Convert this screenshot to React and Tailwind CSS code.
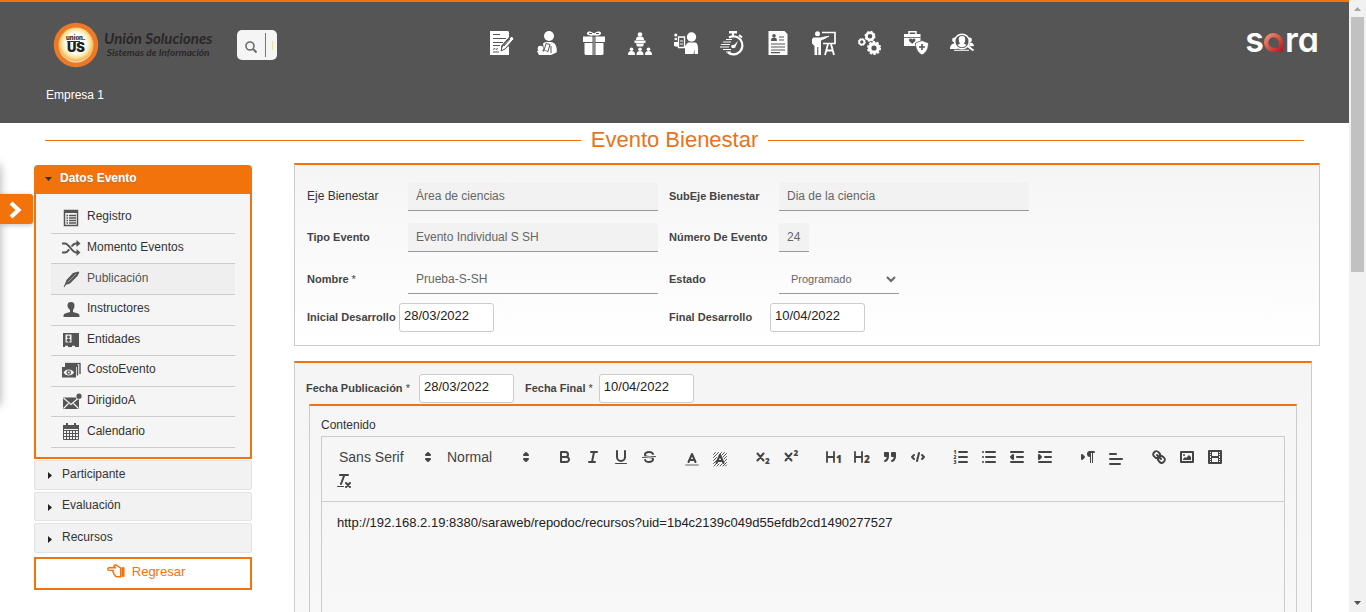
import React from "react";

/* ---------- Header module icons (24px grid, white on grey) ---------- */

const moduleIcons = [
  {
    label: "Solicitudes",
    art: (
      <>
        <path d="M0 0h18l1 1v5l-8 9v4h3l5-4v9H0z" />
        <path d="M3 3.5h7M3 7.5h13M3 11.5h10M3 14.5h7" stroke="#555" strokeWidth="1.2" />
        <path d="M3 18.500l2-1 1 1 2-1M3 21h6" stroke="#555" strokeWidth="1" fill="none" />
        <path d="M21 5.500c2 0 3 1.500 2.500 3L15 18l-4 2 1-4z" stroke="#555" strokeWidth="1" />
        <path d="M14 15l6-7" stroke="#555" strokeWidth="1" />
      </>
    ),
  },
  {
    label: "Nómina",
    art: (
      <>
        <circle cx="13" cy="5" r="5" />
        <path d="M7 12.500c1-1.500 3-1.500 6-1.500 4 0 6 1 7 4 1 2.500 1 5.500.5 6.500L15 24H9z" />
        <path d="M10 12.500l4 1-2 7-4-1z" stroke="#555" strokeWidth="1" />
        <path d="M15 15v7" stroke="#555" strokeWidth="1" />
        <circle cx="4.500" cy="17.500" r="2.800" />
        <path d="M1 20l5-2 6 3.500L11 24H3z" />
        <circle cx="7.500" cy="19.500" r="1" fill="#555" />
      </>
    ),
  },
  {
    label: "Bienestar",
    art: (
      <>
        <path d="M11 4.500C8 5 4.500 4 5 2s4-2 6 0h2c2-2 5.500-2 6 0s-3 3-6 2.500z" />
        <path d="M7 2.500h3M14 2.500h3" stroke="#555" strokeWidth="1" />
        <path d="M1 5.500h9.500V11H1zM13.500 5.500H23V11h-9.500zM2.500 12h8v12h-7l-1-1zM13.500 12h8v11l-1 1h-7z" />
        <path d="M11 6h2v18h-2z" opacity=".3" />
      </>
    ),
  },
  {
    label: "Organigrama",
    art: (
      <>
        <circle cx="12" cy="3.500" r="2.300" />
        <path d="M8 9c0-3 1.500-3.500 4-3.500S16 6 16 9zM6.500 9.500h11V12h-11zM8 12.500h8l-1 3H9z" />
        <circle cx="3.500" cy="18.200" r="1.800" />
        <path d="M0 24c0-3 1-4 3.500-4S7 21 7 24z" />
        <circle cx="12" cy="18.200" r="1.800" />
        <path d="M8.500 24c0-3 1-4 3.500-4s3.500 1 3.500 4z" />
        <circle cx="20.500" cy="18.200" r="1.800" />
        <path d="M17 24c0-3 1-4 3.500-4s3.500 1 3.500 4z" />
      </>
    ),
  },
  {
    label: "Selección",
    art: (
      <>
        <circle cx="17.500" cy="6" r="4.700" />
        <path d="M11 23v-8l3-3.500h7c2.500.5 3.500 3 3 11.500h-3.500v-5l-1 5z" />
        <path d="M4.500 6h6v10.500h-6z" fill="none" stroke="#fff" strokeWidth="1.300" />
        <path d="M6 10h3M6 13h3" stroke="#fff" strokeWidth="1" />
        <circle cx="1.800" cy="4" r="1.600" />
        <circle cx="1.800" cy="8" r="1.300" />
        <path d="M0 11h4v5l-4-1z" />
      </>
    ),
  },
  {
    label: "Tiempos",
    art: (
      <>
        <path d="M9 6.500a9 9 0 1 1-1 15" fill="none" stroke="#fff" strokeWidth="2.200" />
        <path d="M9 0h8v2.500H9zM12 2h2v4h-2z" />
        <path d="M19 4l3 2.500" stroke="#fff" strokeWidth="2" />
        <path d="M6 8.500h6M3 11h8M1 13.500h9M0 16h9M3 18.500h8M6 21h5" stroke="#fff" strokeWidth="1.200" />
        <path d="M12 16l6-6-3 7z" />
        <circle cx="13" cy="15.500" r="1.800" />
      </>
    ),
  },
  {
    label: "Hoja de vida",
    art: (
      <>
        <path d="M2.500 0h16l3 3v21h-19z" />
        <circle cx="8" cy="4.800" r="1.800" fill="#555" />
        <path d="M5 10c0-3 1-3.500 3-3.500s3 .5 3 3.500z" fill="#555" />
        <path d="M13 6h5M13 9h5M5 13h14M5 16h14M5 19h14M5 21.700h9" stroke="#555" strokeWidth="1.200" />
      </>
    ),
  },
  {
    label: "Capacitación",
    art: (
      <>
        <circle cx="5.500" cy="2.800" r="2.500" />
        <path d="M1.500 6.500h7l6-1.500.5 1.500-6 3V24H6.300v-8H5.200v8H2.500v-9L0 12.500V8z" />
        <path d="M10 1.500h13v11H11" fill="none" stroke="#fff" strokeWidth="1.700" />
        <path d="M11 8l6-3" stroke="#fff" strokeWidth="1.200" />
        <path d="M16 13l-3 11M19 13l3 11M14.500 19.500h6" stroke="#fff" strokeWidth="1.800" fill="none" />
      </>
    ),
  },
  {
    label: "Configuración",
    art: (
      <>
        <circle cx="12" cy="5.300" r="3.600" fill="none" stroke="#fff" strokeWidth="2.600" />
        <circle cx="12" cy="5.300" r="4.900" fill="none" stroke="#fff" strokeWidth="1.200" strokeDasharray="2 1.850" />
        <circle cx="3.800" cy="11" r="2.600" fill="none" stroke="#fff" strokeWidth="1.900" />
        <circle cx="3.800" cy="11" r="3.500" fill="none" stroke="#fff" strokeWidth=".8" strokeDasharray="1.500 1.250" />
        <circle cx="16" cy="17" r="4.300" fill="none" stroke="#fff" strokeWidth="3.400" />
        <circle cx="16" cy="17" r="6.300" fill="none" stroke="#fff" strokeWidth="1.500" strokeDasharray="2.300 1.650" />
      </>
    ),
  },
  {
    label: "Seguridad y salud",
    art: (
      <>
        <path d="M5 3V.8h7V3" fill="none" stroke="#fff" strokeWidth="1.500" />
        <path d="M0 3h16.500v9l-3 3H0z" />
        <path d="M0 6.500h16.500" stroke="#555" strokeWidth=".8" />
        <path d="M5 8.500c1-1.500 2.500-1 3.200 0 .8-1 2.300-1.500 3.200 0 .5 1.500-1 2.500-3.200 4.200C6 11 4.500 10 5 8.500z" fill="#555" />
        <path d="M18 9.500l6.500 2.500c0 5.500-2 9.500-6.500 12-4.500-2.500-6.500-6.500-6.500-12z" stroke="#555" strokeWidth=".8" />
        <path d="M18 13v6M15 16h6" stroke="#555" strokeWidth="1.600" />
      </>
    ),
  },
  {
    label: "Búsqueda de personal",
    art: (
      <>
        <circle cx="4.500" cy="9" r="2.400" />
        <path d="M0 18c0-4 2-5.500 5-5.500l3 5.500z" />
        <circle cx="19.500" cy="9" r="2.400" />
        <path d="M24 15c0-2-2-3.500-4-3.500l-1 4z" />
        <circle cx="12" cy="10.500" r="7.300" fill="#555" stroke="#fff" strokeWidth="1.500" />
        <path d="M12 5c2.500 0 3.500 1.500 3.200 4-.2 2-.7 2.800-1.200 3.500l2.500 1.500c-2.500 3-6.500 3-9 0l2.500-1.500c-.5-.7-1-1.500-1.200-3.500C8.500 6.500 9.500 5 12 5z" />
        <path d="M17.500 15l6 4.500" stroke="#fff" strokeWidth="2" />
        <path d="M4 19.300h15" stroke="#fff" strokeWidth="1" />
      </>
    ),
  },
];

/* ---------- Side menu ---------- */

const G = "#555555";

const menuItems = [
  {
    label: "Registro",
    art: (
      <>
        <path d="M2.500 1.500h13v15h-13z" fill="none" stroke={G} strokeWidth="1.500" />
        <path d="M2 1h14v3H2z" fill={G} />
        <path d="M7 6.500h7M7 9h7M7 11.500h7M7 14h7" stroke={G} strokeWidth="1.300" />
        <path d="M4.500 6.500H6M4.500 9H6M4.500 11.500H6M4.500 14H6" stroke={G} strokeWidth="1.300" />
      </>
    ),
  },
  {
    label: "Momento Eventos",
    art: (
      <>
        <path d="M0 4.500h3c4 0 7 9 11 9h2M0 13.500h3c1.700 0 3-1.500 4.200-3.200M9.500 7.500C10.800 5.700 12.200 4.500 14 4.500h2" fill="none" stroke={G} strokeWidth="2" />
        <path d="M14.500 1l4 3.500-4 3.500zM14.500 10l4 3.500-4 3.500z" fill={G} />
      </>
    ),
  },
  {
    label: "Publicación",
    active: true,
    art: (
      <>
        <path d="M11 3l5.500-1.500.8 1L15.500 6 8 13.500l-4 1.300-1.700 2.400-.7-.7L3 14l1.500-4z" fill={G} />
        <path d="M6 12l8-8" stroke="#efefef" strokeWidth=".5" />
      </>
    ),
  },
  {
    label: "Instructores",
    art: (
      <path
        d="M9 1c2.500 0 3.700 1.500 3.500 4-.1 2-.8 3-1.500 4v2l5 1.500c1.200.5 1.500 1.300 1.500 3.500H1.500c0-2.200.3-3 1.500-3.500L8 11V9C7.300 8 5.700 7 5.500 5 5.300 2.500 6.500 1 9 1z"
        fill={G}
      />
    ),
  },
  {
    label: "Entidades",
    art: (
      <>
        <path d="M1 2h16v14H1z" fill={G} />
        <path d="M3.500 3.500h6v8h-6z" fill="#f5f5f5" />
        <circle cx="6.500" cy="6" r="1.400" fill={G} />
        <path d="M4 11.500L5 8l1.500-.5L8 8l1 3.500-1-2-1 2h-1l-1-2z" fill={G} />
        <path d="M3 15.500h3M10 15.500h3" stroke="#f5f5f5" strokeWidth="1.500" />
      </>
    ),
  },
  {
    label: "CostoEvento",
    art: (
      <>
        <path d="M3 2h12v3H3zM0 5h14v10.500H0z" fill={G} />
        <path d="M15.500 2.500v11M18 1.500v10.500" stroke={G} strokeWidth="1.400" />
        <path d="M3 1.500h15.500" stroke={G} strokeWidth="1.300" />
        <path d="M1.500 10.500c2-4 8.500-4 10.500 0-2 4-8.500 4-10.500 0z" fill="#f5f5f5" />
        <circle cx="6.800" cy="10.500" r="2.200" fill={G} />
        <circle cx="6.800" cy="10.500" r="1" fill="#f5f5f5" />
      </>
    ),
  },
  {
    label: "DirigidoA",
    art: (
      <>
        <path d="M1 4.500h16V16H1z" fill={G} />
        <path d="M1.500 5L9 11.500 16.500 5M1.500 15.500l5-5M16.500 15.500l-5-5" fill="none" stroke="#f5f5f5" strokeWidth="1.200" />
        <circle cx="17" cy="3.200" r="3.300" fill="#f5f5f5" />
        <circle cx="17" cy="3.200" r="2.600" fill={G} />
      </>
    ),
  },
  {
    label: "Calendario",
    art: (
      <>
        <path d="M1.500 2.500h15v14h-15z" fill="none" stroke={G} strokeWidth="1" />
        <path d="M1 2h16v4H1zM4 0h2v3H4zM12 0h2v3h-2z" fill={G} />
        <path d="M4.500 7v9M7.500 7v9M10.500 7v9M13.500 7v9M2 7.500h14M2 10.500h14M2 13.500h14" stroke={G} strokeWidth="1" />
      </>
    ),
  },
];

const closedSections = ["Participante", "Evaluación", "Recursos"];

/* ---------- Editor toolbar ---------- */

const K = "#444444";
const fillOnly = { fill: K, stroke: "none" };
const both = { fill: K };
const small = {
  fill: K,
  stroke: "none",
  fontFamily: '"Open Sans", sans-serif',
  fontWeight: 800,
};

const toolGroups = [
  [
    {
      label: "Negrita",
      art: (
        <>
          <path d="M5,4H9.5A2.5,2.5,0,0,1,12,6.5v0A2.5,2.5,0,0,1,9.5,9H5Z" />
          <path d="M5,9h5.5A2.5,2.5,0,0,1,13,11.5v0A2.5,2.5,0,0,1,10.5,14H5Z" />
        </>
      ),
    },
    { label: "Cursiva", art: <path d="M7 4H13M5 14H11M8 14L10 4" /> },
    {
      label: "Subrayado",
      art: (
        <>
          <path d="M5,3V9a4.012,4.012,0,0,0,4,4H9a4.012,4.012,0,0,0,4-4V3" />
          <rect x="3" y="15" width="12" height="1" rx=".5" {...fillOnly} />
        </>
      ),
    },
    {
      label: "Tachado",
      art: (
        <>
          <path d="M15.500 8.500L2.500 9.500" strokeWidth="1" />
          <path {...fillOnly} d="M9.007,8C6.542,7.791,6,7.519,6,6.5,6,5.792,7.283,5,9,5c1.571,0,2.765.679,2.969,1.309a1,1,0,0,0,1.9-.617C13.356,4.106,11.354,3,9,3,6.2,3,4,4.538,4,6.5a3.2,3.2,0,0,0,.5,1.843Z" />
          <path {...fillOnly} d="M8.984,10C11.457,10.208,12,10.479,12,11.5c0,.708-1.283,1.500-3,1.500-1.571,0-2.765-.679-2.969-1.309a1,1,0,1,0-1.900.617C4.644,13.894,6.646,15,9,15c2.800,0,5-1.538,5-3.500a3.200,3.200,0,0,0-.5-1.843Z" />
        </>
      ),
    },
  ],
  [
    {
      label: "Color de texto",
      picker: true,
      art: (
        <>
          <path d="M3 15H15" opacity=".4" />
          <path d="M5.500 12L9 4L12.500 12M11.630 10H6.380" />
        </>
      ),
    },
    {
      label: "Color de fondo",
      picker: true,
      art: (
        <>
          <path
            strokeWidth=".9"
            d="M2.500 4.500l2-2M2.500 7.500l5-5M2.500 10.500l3-3M8 5l2.500-2.500M2.500 13.500l3-3M11 5l2.500-2.500M3 16l2.500-2.500M12 7l3.500-3.500M6 16l2-2M13 9l2.500-2.500M9 16l2-2M13.500 11.500l2-2M12 16l3.500-3.500M14.500 16l1-1"
          />
          <path d="M5.500 13L9 5L12.500 13M11.630 11H6.380" />
        </>
      ),
    },
  ],
  [
    {
      label: "Subíndice",
      art: (
        <>
          <path d="M3.500 5.500L9.500 12.500M9.500 5.500L3.500 12.500" />
          <text x="11" y="16" fontSize="8" {...small}>2</text>
        </>
      ),
    },
    {
      label: "Superíndice",
      art: (
        <>
          <path d="M3.500 5.500L9.500 12.500M9.500 5.500L3.500 12.500" />
          <text x="11.500" y="8" fontSize="8" {...small}>2</text>
        </>
      ),
    },
  ],
  [
    {
      label: "Título 1",
      art: (
        <>
          <path d="M2 4V14M9 4V14M2 9H9" strokeWidth="1.800" />
          <text x="11" y="14.500" fontSize="10" {...small}>1</text>
        </>
      ),
    },
    {
      label: "Título 2",
      art: (
        <>
          <path d="M2 4V14M9 4V14M2 9H9" strokeWidth="1.800" />
          <text x="11" y="14.500" fontSize="10" {...small}>2</text>
        </>
      ),
    },
    {
      label: "Cita",
      art: (
        <>
          <rect x="4" y="5" width="3" height="3" {...both} />
          <rect x="11" y="5" width="3" height="3" {...both} />
          <path d="M7,8c0,4.031-3,5-3,5" {...both} />
          <path d="M14,8c0,4.031-3,5-3,5" {...both} />
        </>
      ),
    },
    { label: "Código", art: <path d="M5 7L3 9L5 11M13 7L15 9L13 11M10 5L8 13" /> },
  ],
  [
    {
      label: "Lista numerada",
      art: (
        <>
          <path d="M7 4H15M7 9H15M7 14H15" />
          <text x="1.500" y="6" fontSize="5" {...small}>1</text>
          <text x="1.500" y="11" fontSize="5" {...small}>2</text>
          <text x="1.500" y="16" fontSize="5" {...small}>3</text>
        </>
      ),
    },
    { label: "Lista", art: <path d="M6 4H15M6 9H15M6 14H15M3 4H3.010M3 9H3.010M3 14H3.010" /> },
    {
      label: "Reducir sangría",
      art: (
        <>
          <path d="M3 14H15M3 4H15M9 9H15" />
          <path d="M5 7V11L3 9Z" {...both} />
        </>
      ),
    },
    {
      label: "Aumentar sangría",
      art: (
        <>
          <path d="M3 14H15M3 4H15M9 9H15" />
          <path d="M3 7V11L5 9Z" {...both} />
        </>
      ),
    },
  ],
  [
    {
      label: "Dirección",
      art: (
        <>
          <path d="M3 11L5 9L3 7Z" {...both} />
          <path d="M15 4H11" />
          <path d="M11,3a3,3,0,0,0,0,6h1V3H11Z" {...fillOnly} />
          <rect x="11" y="4" width="1" height="11" {...fillOnly} />
          <rect x="13" y="4" width="1" height="11" {...fillOnly} />
        </>
      ),
    },
    { label: "Alineación", picker: true, art: <path d="M3 9H15M3 14H13M3 4H9" /> },
  ],
  [
    {
      label: "Enlace",
      art: (
        <>
          <path d="M7 7L11 11" />
          <path d="M8.9,4.577a3.476,3.476,0,0,1,.36,4.679A3.476,3.476,0,0,1,4.577,8.900C3.185,7.500,2.035,6.400,4.217,4.217S7.500,3.185,8.900,4.577Z" />
          <path d="M13.423,9.100a3.476,3.476,0,0,0-4.679-.36,3.476,3.476,0,0,0,.36,4.679c1.392,1.392,2.500,2.542,4.679.36S14.815,10.500,13.423,9.100Z" />
        </>
      ),
    },
    {
      label: "Imagen",
      art: (
        <>
          <rect x="3" y="4" width="12" height="10" />
          <circle cx="6" cy="7" r="1" {...fillOnly} />
          <path d="M5 12V11L7 9L8 10L11 7L13 9V12Z" {...fillOnly} />
        </>
      ),
    },
    {
      label: "Vídeo",
      art: (
        <>
          <rect x="3" y="3" width="12" height="12" />
          <path d="M5 3h1v12H5zM12 3h1v12h-1zM5 8h8v2H5zM3 5h3v1H3zM3 7h3v1H3zM3 10h3v1H3zM3 12h3v1H3zM12 5h3v1h-3zM12 7h3v1h-3zM12 10h3v1h-3zM12 12h3v1h-3z" {...fillOnly} />
        </>
      ),
    },
  ],
  [
    {
      label: "Quitar formato",
      art: (
        <>
          <path d="M5 3H13M6 12L9.350 3M11 11L15 15M15 11L11 15" />
          <rect x="2" y="14" width="7" height="1" rx=".5" {...fillOnly} />
        </>
      ),
    },
  ],
];

function ToolIcon({ children }) {
  return (
    <svg viewBox="0 0 18 18" className="size-[18px] shrink-0" fill="none" stroke={K} strokeWidth="2" strokeLinecap="round" strokeLinejoin="round" aria-hidden="true">
      {children}
    </svg>
  );
}

function ToolSelect({ label, value, width }) {
  return (
    <span className={`relative inline-flex h-6 items-center ${width}`}>
      <select aria-label={label} className="h-6 w-full appearance-none bg-transparent pl-[9px] text-[14px] font-medium text-[#444]">
        <option>{value}</option>
      </select>
      <svg viewBox="0 0 18 18" className="pointer-events-none absolute right-px size-[18px]" fill={K} stroke={K} strokeWidth="2" strokeLinejoin="round" aria-hidden="true">
        <path d="M7 11L9 13L11 11ZM7 7L9 5L11 7Z" />
      </svg>
    </span>
  );
}

/* ---------- Form parts ---------- */

function Label({ htmlFor, plain, children }) {
  return (
    <label htmlFor={htmlFor} className={plain ? "pb-[2px] text-[12px] text-[#333]" : "text-[11px] font-bold text-[#444]"}>
      {children}
    </label>
  );
}

function LineInput({ id, value, width = "w-[250px]", locked = true }) {
  return (
    <input
      id={id}
      defaultValue={value}
      readOnly={locked}
      className={`h-[29px] rounded-t-[3px] border-b border-[#999] px-2 text-[12px] text-[#666] ${width} ${locked ? "bg-[#f2f2f2]" : "bg-transparent"}`}
    />
  );
}

function DateInput({ id, value }) {
  return (
    <input id={id} defaultValue={value} className="h-[29px] w-[95px] rounded-[3px] border border-[#ccc] bg-white px-1 pb-1 text-[13px] text-[#222]" />
  );
}

const Required = () => <span className="font-normal text-[#444]"> *</span>;

export default function App() {
  return (
    <div className="flex h-screen overflow-hidden bg-white font-['Liberation_Sans',Arial,sans-serif] text-[#333]">
      <div className="relative min-w-0 flex-1 overflow-hidden">
        <header className="h-[123px] border-t-2 border-[#f2720c] bg-[#555]">
          <div className="flex h-[82px] items-center">
            <div className="flex w-[490px] shrink-0 items-center pl-[53px]">
              <a href="#inicio" aria-label="Inicio" className="mt-[3px] flex w-[162px] items-center gap-[5px]">
                <svg viewBox="0 0 46 46" className="size-[46px] shrink-0" aria-hidden="true">
                  <defs>
                    <radialGradient id="glow" cx="50%" cy="45%" r="55%">
                      <stop offset="0.500" stopColor="#ffffff" />
                      <stop offset="0.720" stopColor="#fbe7a0" />
                      <stop offset="0.900" stopColor="#f6b45e" />
                      <stop offset="1" stopColor="#fff3d8" />
                    </radialGradient>
                  </defs>
                  <circle cx="23" cy="23" r="22.300" fill="#ea7a26" />
                  <circle cx="23" cy="23" r="17.500" fill="url(#glow)" />
                  <text x="21.500" y="18" textAnchor="middle" fontSize="6" fontWeight="800" fill="#222" fontFamily="Inter, sans-serif">union</text>
                  <path d="M14 19.500h13" stroke="#333" strokeWidth="1" />
                  <path d="M28 17.500h4" stroke="#d33" strokeWidth="1" />
                  <text x="23" y="29.500" textAnchor="middle" fontSize="13" fontWeight="900" fill="#222" fontFamily="Inter, sans-serif">US</text>
                </svg>
                <span className="flex flex-col items-center whitespace-nowrap font-['Lato',sans-serif] font-bold italic text-[#2b2728]">
                  <span className="text-[15px] leading-[15px]">Unión Soluciones</span>
                  <span className="text-[10px] leading-[12px]">Sistemas de Información</span>
                </span>
              </a>
              <form className="mt-1 ml-[22px] flex h-[30px] w-10 items-center rounded-[5px] bg-[#f5f5f5] pl-2" role="search">
                <button type="button" aria-label="Buscar" className="flex h-6 w-[21px] items-center border-r border-[#777] pt-1">
                  <svg viewBox="0 0 12 12" className="size-3" fill="none" stroke="#6b6b6b" strokeWidth="1.600" aria-hidden="true">
                    <circle cx="5" cy="5" r="4" />
                    <path d="M8 8l3.500 3.500" strokeWidth="2" />
                  </svg>
                </button>
                <input aria-label="Texto de búsqueda" className="ml-[6px] h-[9px] w-1 border-l border-[#f3dc9a]" />
              </form>
            </div>
            <nav className="flex gap-[22px]" aria-label="Módulos">
              {moduleIcons.map((m) => (
                <a key={m.label} href="#modulo" aria-label={m.label} className="block size-6">
                  <svg viewBox="0 0 24 24" className="size-6 overflow-visible" fill="#fff" aria-hidden="true">
                    {m.art}
                  </svg>
                </a>
              ))}
            </nav>
            <div className="flex flex-1 items-center justify-end pr-[30px]">
              <a href="#sara" aria-label="sara" className="flex items-baseline pb-[6px] font-['Inter',sans-serif] text-[34px] leading-[26px] font-semibold text-white [font-feature-settings:'cv11']">
                <span>s</span>
                <svg viewBox="0 0 20 19" className="mr-px h-[19px] w-5" aria-hidden="true">
                  <defs>
                    <linearGradient id="drop" x1="0" y1="0" x2="1" y2="1">
                      <stop offset="0" stopColor="#f2a083" />
                      <stop offset="0.450" stopColor="#e05a48" />
                      <stop offset="1" stopColor="#a8161c" />
                    </linearGradient>
                  </defs>
                  <path fillRule="evenodd" fill="url(#drop)" d="M9.500 0A9.500 9.500 0 0 1 19 9.500V19H9.500A9.500 9.500 0 0 1 9.500 0zM9.500 4.300a5.200 5.200 0 1 0 0 10.400H14.700V9.500A5.200 5.200 0 0 0 9.500 4.300z" />
                </svg>
                <span>ra</span>
              </a>
            </div>
          </div>
          <p className="pt-[3px] pl-[46px] text-[12px] leading-4 text-white">Empresa 1</p>
        </header>

        <div className="flex h-[34px] items-center gap-[10px] px-[45px]">
          <span className="h-px flex-1 bg-[#f2720c]" />
          <h1 className="text-[22px] leading-[34px] text-[#e8731c]">Evento Bienestar</h1>
          <span className="h-px flex-1 bg-[#f2720c]" />
        </div>

        <div className="flex items-start gap-[42px] pt-[6px] pr-[29px] pl-[34px]">
          <aside className="mt-[2px] w-[218px] shrink-0">
            <h2>
              <button type="button" aria-expanded="true" className="flex h-[29px] w-full items-center gap-2 rounded-t-[4px] bg-[#f2720c] pb-[3px] pl-[11px] text-[12px] font-bold text-white [text-shadow:0_1px_1px_#7778]">
                <svg viewBox="0 0 7 4" className="mt-[2px] h-1 w-[7px]" fill="#333" aria-hidden="true">
                  <path d="M0 0h7L3.500 4z" />
                </svg>
                Datos Evento
              </button>
            </h2>
            <nav className="border-2 border-t-0 border-[#f2720c] bg-[#f5f5f5] px-[15px] py-[9px]" aria-label="Datos Evento">
              <ul className="grid h-[245px] auto-rows-fr">
                {menuItems.map((m) => (
                  <li key={m.label} className={`border-b border-[#ccc] ${m.active ? "bg-[#efefef]" : ""}`}>
                    <a href="#seccion" className={`flex h-full items-center gap-[7px] pb-[3px] pl-[11px] text-[12px] ${m.active ? "text-[#555]" : "text-[#333]"}`}>
                      <svg viewBox="0 0 18 18" className="mt-[3px] size-[18px] overflow-visible" aria-hidden="true">
                        {m.art}
                      </svg>
                      {m.label}
                    </a>
                  </li>
                ))}
              </ul>
            </nav>
            <div className="mt-px grid h-[93px] auto-rows-fr gap-[2px]">
              {closedSections.map((s) => (
                <button key={s} type="button" aria-expanded="false" className="flex items-center gap-[10px] rounded-[2px] border border-[#e2e2e2] bg-[#f2f2f2] pb-[2px] pl-[13px] text-[12px] text-[#333]">
                  <svg viewBox="0 0 4 7" className="mt-1 h-[7px] w-1" fill="#222" aria-hidden="true">
                    <path d="M0 0v7l4-3.500z" />
                  </svg>
                  {s}
                </button>
              ))}
            </div>
            <button type="button" className="mt-1 flex h-[33px] w-full items-center justify-center gap-[7px] border-2 border-[#f2720c] bg-white pl-[6px] pb-1 text-[13px] text-[#f2720c]">
              <svg viewBox="0 0 18 14" className="mb-[2px] h-[14px] w-[18px]" fill="none" stroke="#f2720c" strokeWidth="1.400" strokeLinejoin="round" aria-hidden="true">
                <path d="M7.500 3.800H2a1.200 1.200 0 0 0 0 2.600h4.500c-1 .8-.8 2 .3 2.500-.3 1 .2 1.900 1.200 2.100 0 1.200.8 1.700 2 1.700h3.700V4L11 2.300C10 1.500 8.500.8 7.300 1.200c-.8.600 0 1.800 1.200 2.600z" />
                <path d="M14.800 3.500h2.400v9.200h-2.400z" fill="#f2720c" strokeWidth=".6" />
              </svg>
              Regresar
            </button>
          </aside>

          <main className="flex min-w-0 flex-1 flex-col gap-[15px]">
            <section className="border border-t-2 border-[#ccc] border-t-[#f2720c] bg-linear-to-b from-[#f5f5f5] to-white px-3 pt-[17px] pb-[13px]">
              <div className="grid grid-cols-[101px_261px_110px_1fr] items-center">
                <Label htmlFor="eje" plain>Eje Bienestar</Label>
                <LineInput id="eje" value="Área de ciencias" />
                <Label htmlFor="subeje">SubEje Bienestar</Label>
                <LineInput id="subeje" value="Dia de la ciencia" />
              </div>
              <div className="mt-3 grid grid-cols-[101px_261px_110px_1fr] items-center">
                <Label htmlFor="tipo">Tipo Evento</Label>
                <LineInput id="tipo" value="Evento Individual S SH" />
                <Label htmlFor="numero">Número De Evento</Label>
                <LineInput id="numero" value="24" width="w-[30px]" />
              </div>
              <div className="mt-[13px] grid grid-cols-[101px_261px_110px_1fr] items-center">
                <Label htmlFor="nombre">Nombre<Required /></Label>
                <LineInput id="nombre" value="Prueba-S-SH" locked={false} />
                <Label htmlFor="estado">Estado</Label>
                <select id="estado" className="h-[29px] w-[120px] border-b border-[#999] bg-transparent pl-2 text-[11px] text-[#666]">
                  <option>Programado</option>
                </select>
              </div>
              <div className="mt-[9px] grid grid-cols-[92px_270px_101px_1fr] items-center">
                <Label htmlFor="inicio">Inicial Desarrollo</Label>
                <DateInput id="inicio" value="28/03/2022" />
                <Label htmlFor="fin">Final Desarrollo</Label>
                <DateInput id="fin" value="10/04/2022" />
              </div>
            </section>

            <section className="mr-2 border border-t-2 border-b-0 border-[#ccc] border-t-[#f2720c] bg-linear-to-b from-[#f5f5f5] to-white px-[14px] pt-[11px]">
              <div className="flex items-center pb-px">
                <div className="-ml-[3px] flex items-center gap-[9px]">
                  <Label htmlFor="publicacion">Fecha Publicación<Required /></Label>
                  <DateInput id="publicacion" value="28/03/2022" />
                </div>
                <div className="ml-[11px] flex items-center gap-[6px]">
                  <Label htmlFor="final">Fecha Final<Required /></Label>
                  <DateInput id="final" value="10/04/2022" />
                </div>
              </div>
              <div className="border border-t-2 border-b-0 border-[#ccc] border-t-[#f2720c] px-[11px] pt-[11px]">
                <label htmlFor="contenido" className="block h-[19px] text-[12px] leading-4 text-[#333]">Contenido</label>
                <div className="flex flex-wrap border border-[#ccc] p-2" role="toolbar" aria-label="Formato">
                  <div className="mr-[15px] flex">
                    <ToolSelect label="Fuente" value="Sans Serif" width="w-[108px]" />
                    <ToolSelect label="Tamaño" value="Normal" width="w-[98px]" />
                  </div>
                  {toolGroups.map((group) => (
                    <div key={group[0].label} className="mr-[15px] flex">
                      {group.map((t) => (
                        <button key={t.label} type="button" aria-label={t.label} className={`flex h-6 w-7 items-center justify-center ${t.picker ? "pt-[3px]" : ""}`}>
                          <ToolIcon>{t.art}</ToolIcon>
                        </button>
                      ))}
                    </div>
                  ))}
                </div>
                <textarea
                  id="contenido"
                  className="block h-[800px] w-full resize-none border border-t-0 border-[#ccc] bg-transparent px-[15px] py-3 text-[13px] leading-[18px] text-[#222]"
                  defaultValue="http://192.168.2.19:8380/saraweb/repodoc/recursos?uid=1b4c2139c049d55efdb2cd1490277527"
                />
              </div>
            </section>
          </main>
        </div>

        <div className="absolute top-[165px] -left-[10px] h-[240px] w-[10px] shadow-[0_0_10px_#aaa]" />
        <button type="button" aria-label="Abrir panel" className="absolute top-[194px] left-0 flex h-[30px] w-[33px] items-center rounded-r-[3px] bg-[#f2720c] pt-px pl-[9px] shadow-[0_1px_5px_#9999]">
          <svg viewBox="0 0 13 18" className="h-[18px] w-[13px]" fill="none" stroke="#fff" strokeWidth="4.200" aria-hidden="true">
            <path d="M2 2l7.500 7L2 16" />
          </svg>
        </button>
      </div>

      <div className="flex w-[17px] shrink-0 flex-col items-center justify-between bg-[#f1f1f1]" aria-hidden="true">
        <div className="flex w-full flex-col items-center">
          <svg viewBox="0 0 17 17" className="size-[17px]" fill="#a3a3a3">
            <path d="M5 11h7L8.500 7z" />
          </svg>
          <div className="h-[255px] w-[13px] bg-[#c1c1c1]" />
        </div>
        <svg viewBox="0 0 17 17" className="size-[17px]" fill="#505050">
          <path d="M5 6h7L8.500 10z" />
        </svg>
      </div>
    </div>
  );
}
